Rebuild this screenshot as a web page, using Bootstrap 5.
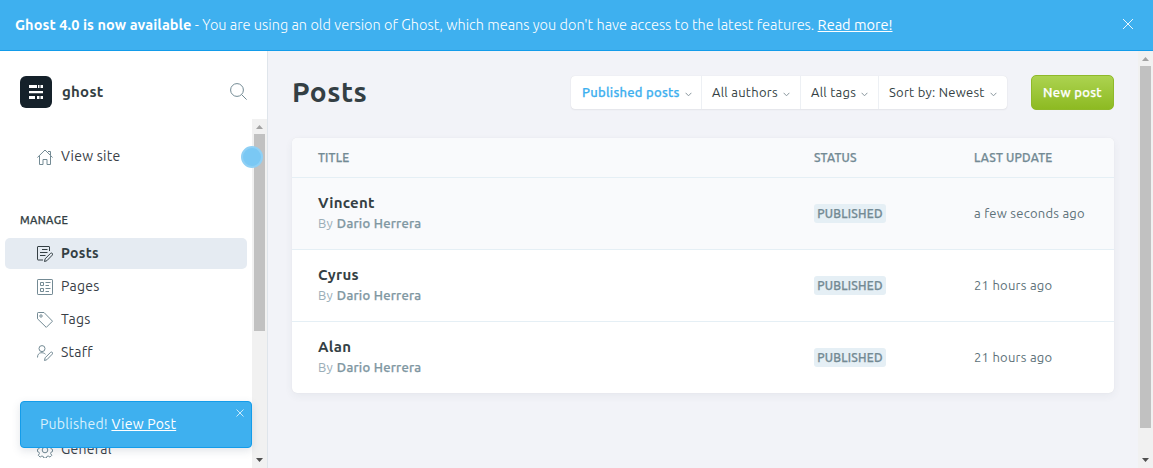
<!DOCTYPE html>
<html lang="en">
<head>
<meta charset="utf-8">
<meta name="viewport" content="width=device-width, initial-scale=1">
<title>Posts - Ghost</title>
<link href="https://cdn.jsdelivr.net/npm/bootstrap@5.3.0/dist/css/bootstrap.min.css" rel="stylesheet">
<style>
body{font-family:Ubuntu,"Noto Sans","Open Sans",sans-serif;font-size:14px;line-height:20px;letter-spacing:.25px;color:#394047;background:#f2f3f8}
svg{display:block;flex:none;fill:none;stroke:currentColor}
.upgrade{height:51px;background:#3eb0ef;border-bottom:1px solid #139cea;padding:0 19px 0 15px;font-size:14.5px;font-weight:300;letter-spacing:.015px;color:#fff}
.upgrade b{font-weight:700;letter-spacing:.08px}
.upgrade a,.toast-note a{color:#fff;font-weight:400}
.side{width:268px;background:#fff;border-right:1px solid #dfe5eb}
.side-head{height:68px;padding:25px 20px 0 20px}
.logo{width:32px;height:32px;border-radius:6px;background:#15212a}
.site{font-size:15px;font-weight:700;margin-left:10px;color:#343f44}
.side-head .find{color:#738a94}
.item{height:31px;margin:0 5px 2px;padding:0 32px 2px;border-radius:5px;gap:8px}
.item svg{color:#738a94;margin-top:3px}
.item.on{background:#e5ebf2;font-weight:700;letter-spacing:.32px;color:#343f44}
.item.on svg{color:#343f44;margin-top:3px}
.first{margin-top:22px}
.heading{margin:38px 20px 8px;font-size:11px;line-height:20px;font-weight:500;letter-spacing:.35px;color:#343f44}
.heading,.pill,.newpost,.filters .chosen,.by b,.line.top{-webkit-text-stroke:.25px currentColor}
.gap-group{height:64px}
.sbar{width:15px;background:#f1f1f1}
.thumb{width:11px;margin:0 2px;background:#c1c1c1}
.sbar svg{height:15px;width:15px;stroke:none;fill:#a3a3a3}
.sbar svg:last-child{fill:#505050}
.toast-note{position:absolute;left:20px;top:401px;width:232px;height:47px;background:#3eb0ef;border:1px solid #139cea;border-radius:4px;padding:0 19px 2px;color:#d9f0fc;box-shadow:0 3px 8px rgba(60,80,110,.15)}
.toast-note svg{position:absolute;right:7px;top:7px}
.pointer{position:absolute;left:241px;top:146px;width:22px;height:22px;border-radius:50%;background:#7ac8f4;border:2px solid #8fd0f5}
h1{font-size:28px;line-height:34px;font-weight:700;letter-spacing:.5px;color:#343f44}
.main-head{padding:24px 24px 0}
.filters{height:33px;margin-top:1px;background:#fff;border-radius:4px;box-shadow:0 0 1px rgba(0,0,0,.12),0 1px 2px rgba(0,0,0,.05);font-size:13px;color:#343f44;margin-right:24px}
.filters>div{padding:0 0 2px 10px;gap:5px;border-right:1px solid #edf0f4;white-space:nowrap}
.filters>div:last-child{border:0}
.filters svg{color:#8a979e;margin-top:6px}
.filters .chosen{color:#3eb0ef;font-weight:500;padding-left:11px}
.newpost{width:83px;height:35px;border:1px solid #8fb92a;border-radius:5px;background:linear-gradient(#acd350,#8dba22);color:#fff;font-size:13px;font-weight:500;line-height:33px;padding:0;letter-spacing:.3px}
.list{margin:28px 24px 0;background:#fff;border-radius:5px;box-shadow:0 0 1px rgba(0,0,0,.1),0 3px 8px rgba(50,60,90,.06);overflow:hidden}
.line{height:72px;border-bottom:1px solid #e5eff5;padding-left:26px}
.line:last-child{border:0;height:71px}
.line.top{height:40px;font-size:12px;font-weight:500;letter-spacing:.2px;color:#738a94}
.tint{background:#f9fafc}
.c-status{width:160px}.c-date{width:140px}
.line .c-date{color:#5d7179;font-size:13px;padding-bottom:2px}
.line.top .c-date{font-size:12px;color:#738a94;padding:0}
.ttl{font-size:15px;font-weight:700;line-height:21px;color:#343f44}
.by{font-size:13px;line-height:20px;color:#9baeb8;margin-bottom:2px}
.by b{font-weight:500;color:#8097a2;margin-left:.6px}
.pill{background:#e5eff5;border-radius:3px;width:72px;height:19px;font-size:12px;font-weight:500;letter-spacing:.2px;color:#738a94}
</style>
</head>
<body class="vh-100 overflow-hidden d-flex flex-column position-relative">
<div class="upgrade d-flex align-items-center flex-shrink-0">
<div class="flex-grow-1 text-nowrap"><b>Ghost 4.0 is now available</b> - You are using an old version of Ghost, which means you don't have access to the latest features. <a href="#">Read more!</a></div>
<svg width="12" height="12" viewBox="0 0 12 12" stroke-width=".9" style="margin-top:-3px"><path d="M1 1l10 10M11 1L1 11"/></svg>
</div>
<div class="d-flex flex-grow-1 overflow-hidden">
<aside class="side d-flex flex-column flex-shrink-0">
<div class="side-head d-flex flex-shrink-0">
<div class="logo d-flex align-items-center justify-content-center flex-shrink-0"><svg width="14" height="14" viewBox="0 0 14 14" style="stroke:none;fill:#fff"><path d="M0 0h8v3H0zM9 0h1.500v3H9zM11.500 0H14v3h-2.500zM0 6h14v2.300H0zM0 11h6v3H0zM8 11h2.500v3H8zM11.500 11H14v3h-2.500z"/></svg></div>
<div class="site pt-1 flex-grow-1" style="line-height:24px">ghost</div>
<svg class="find" width="17" height="17" viewBox="0 0 17 17" style="margin-top:7px"><circle cx="7" cy="7" r="6.400"/><path d="M11.600 11.600l5 5"/></svg>
</div>
<div class="d-flex flex-grow-1 overflow-hidden">
<nav class="flex-grow-1">
<div class="item first d-flex align-items-center"><svg width="16" height="16" viewBox="0 0 16 16"><path d="M.4 8.500L8 1l7.600 7.500M2.500 7v8.500H6v-5h4v5h3.500V7M11 2.500h2.500V6"/></svg>View site</div>
<div class="heading">MANAGE</div>
<div class="item on d-flex align-items-center"><svg width="16" height="16" viewBox="0 0 16 16"><path d="M12.500 5V1q0-.5-.5-.5H1Q.5.500.5 1v12.500q0 .5.5.5h5M5 3.500h5.500M3 6.500h7.500M3 9.500h5.500M7.500 15.500l.6-2.700 5.500-5.500q1-.6 1.700.1t0 1.700L9.900 14.700z"/></svg>Posts</div>
<div class="item d-flex align-items-center"><svg width="16" height="16" viewBox="0 0 16 16"><rect x=".5" y=".5" width="15" height="15" rx=".6"/><path d="M3.500 3.500h3v3h-3zM3.500 9.500h3v3h-3zM8.500 3.500h5M8.500 6.500h3.500M8.500 9.500h5M8.500 12.500h3.500"/></svg>Pages</div>
<div class="item d-flex align-items-center"><svg width="16" height="16" viewBox="0 0 16 16"><path d="M.5 1.200q0-.7.7-.7H7l8.500 8.700-6.200 6.200L.5 6.800z"/><circle cx="4" cy="4" r="1.200"/></svg>Tags</div>
<div class="item d-flex align-items-center"><svg width="16" height="16" viewBox="0 0 16 16"><circle cx="5" cy="3.600" r="3"/><path d="M.5 12.500C.5 6.500 6.500 7 8.500 9.300M7.500 15.500l.6-2.700 5.500-5.500q1-.6 1.700.1t0 1.700L9.900 14.700z"/></svg>Staff</div>
<div class="gap-group"></div>
<div class="item d-flex align-items-center"><svg width="16" height="16" viewBox="0 0 16 16"><circle cx="8" cy="8" r="2.800"/><path d="M6.800.5h2.400l.5 2 1.400.6 1.800-1.100 1.900 1.900-1.100 1.800.6 1.300 1.200.4v2.200l-1.400.5-.5 1.400 1.200 1.800-1.800 1.800-1.800-1.100-1.400.5-.5 1.500H6.800l-.5-1.500-1.400-.5-1.800 1.100-1.800-1.800 1.100-1.800-.5-1.400L.5 9.600V7.300l1.400-.5.5-1.300-1.100-1.700L3.100 2l1.800 1.100 1.400-.6z"/></svg>General</div>
</nav>
<div class="sbar d-flex flex-column"><svg viewBox="0 0 15 15"><path d="M7.500 6L11 10H4z"/></svg><div class="thumb" style="height:197px"></div><svg class="mt-auto" viewBox="0 0 15 15"><path d="M4 5h7L7.500 9z"/></svg></div>
</div>
</aside>
<main class="flex-grow-1">
<div class="main-head d-flex">
<h1 class="me-auto mb-0">Posts</h1>
<div class="filters d-flex">
<div class="chosen d-flex align-items-center" style="width:131px">Published posts<svg width="7" height="5" viewBox="0 0 7 5"><path d="M.6.8l2.900 3 2.900-3"/></svg></div>
<div class="d-flex align-items-center" style="width:99px">All authors<svg width="7" height="5" viewBox="0 0 7 5"><path d="M.6.8l2.900 3 2.900-3"/></svg></div>
<div class="d-flex align-items-center" style="width:78px">All tags<svg width="7" height="5" viewBox="0 0 7 5"><path d="M.6.8l2.900 3 2.900-3"/></svg></div>
<div class="d-flex align-items-center" style="width:128px">Sort by: Newest<svg width="7" height="5" viewBox="0 0 7 5"><path d="M.6.8l2.900 3 2.900-3"/></svg></div>
</div>
<button class="newpost btn">New post</button>
</div>
<div class="list">
<div class="line top tint d-flex align-items-center"><div class="flex-grow-1">TITLE</div><div class="c-status">STATUS</div><div class="c-date">LAST UPDATE</div></div>
<div class="line tint d-flex align-items-center"><div class="flex-grow-1"><div class="ttl">Vincent</div><div class="by">By <b>Dario Herrera</b></div></div><div class="c-status"><div class="pill d-flex align-items-center justify-content-center">PUBLISHED</div></div><div class="c-date">a few seconds ago</div></div>
<div class="line d-flex align-items-center"><div class="flex-grow-1"><div class="ttl">Cyrus</div><div class="by">By <b>Dario Herrera</b></div></div><div class="c-status"><div class="pill d-flex align-items-center justify-content-center">PUBLISHED</div></div><div class="c-date">21 hours ago</div></div>
<div class="line d-flex align-items-center"><div class="flex-grow-1"><div class="ttl">Alan</div><div class="by">By <b>Dario Herrera</b></div></div><div class="c-status"><div class="pill d-flex align-items-center justify-content-center">PUBLISHED</div></div><div class="c-date">21 hours ago</div></div>
</div>
</main>
<div class="sbar d-flex flex-column flex-shrink-0"><svg viewBox="0 0 15 15"><path d="M7.500 6L11 10H4z"/></svg><div class="thumb" style="height:362px"></div><svg class="mt-auto" viewBox="0 0 15 15"><path d="M4 5h7L7.500 9z"/></svg></div>
</div>
<div class="toast-note d-flex align-items-center"><div>Published! <a href="#">View Post</a></div><svg width="8" height="8" viewBox="0 0 8 8" stroke-width=".9"><path d="M.5.5l7 7M7.500.5l-7 7"/></svg></div>
<div class="pointer"></div>
</body>
</html>
